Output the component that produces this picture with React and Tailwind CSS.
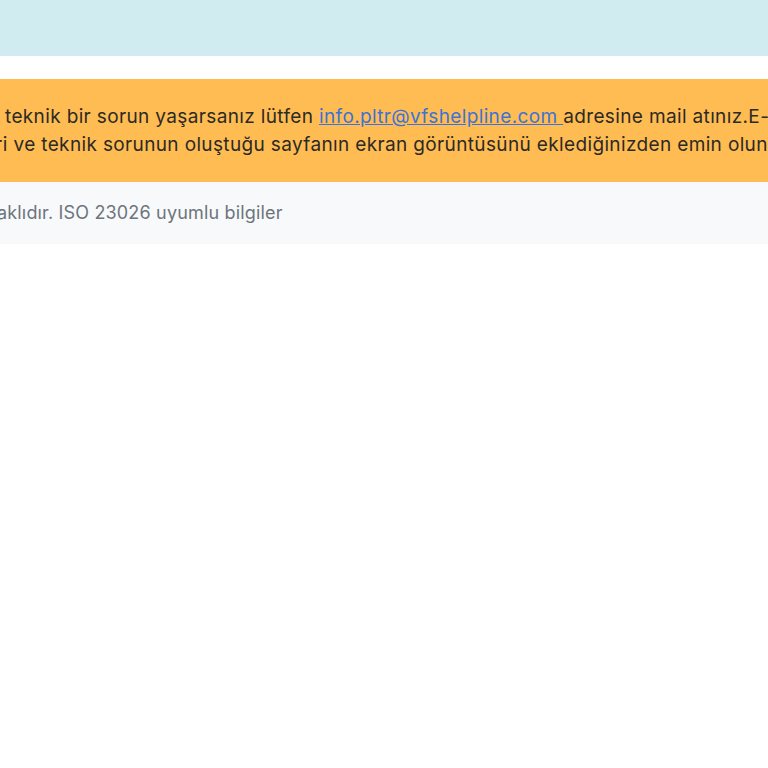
import React from 'react';

const App = () => {
    return (
        <div className="min-h-[768px] bg-white overflow-hidden font-['Inter',sans-serif] text-[18px] leading-[28px] whitespace-nowrap">
            <div className="h-[56px] bg-[#d1ecf1]" />
            <div className="mt-[23px] h-[103px] bg-[#ffbc52] pt-[24px] text-[#2b2a26] text-[19px] tracking-[0.36px]">
                <p className="pl-[5px]">
                    teknik bir sorun yaşarsanız lütfen <a href="#" className="text-[#3b73d9] underline">info.pltr@vfshelpline.com </a>adresine mail atınız.E-posta
                </p>
                <p className="ml-[-5px]">
                    ri ve teknik sorunun oluştuğu sayfanın ekran görüntüsünü eklediğinizden emin olunuz.
                </p>
            </div>
            <div className="h-[62px] bg-[#f8f9fa] pt-[17px] text-[#6c757d] text-[18px] tracking-[0.17px]">
                <p className="ml-[-3px]">aklıdır. ISO 23026 uyumlu bilgiler</p>
            </div>
        </div>
    );
};

export default App;
